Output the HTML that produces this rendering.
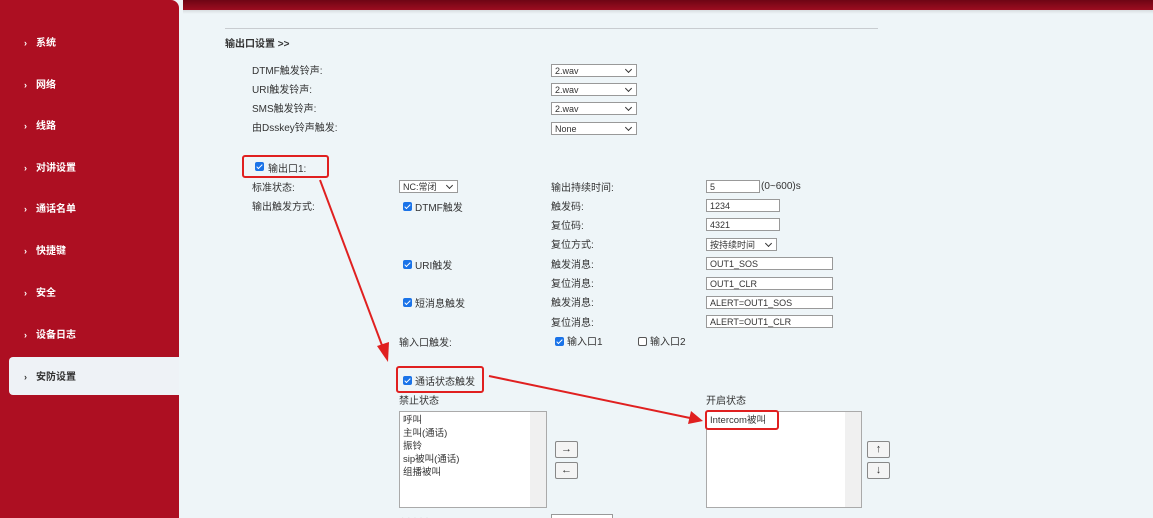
<!DOCTYPE html>
<html><head><meta charset="utf-8"><style>
*{margin:0;padding:0;box-sizing:border-box}
html,body{width:1153px;height:518px;overflow:hidden}
body{background:#eef5f8;font-family:"Liberation Sans","Noto Sans CJK SC",sans-serif;font-size:10px;line-height:14px;color:#333;position:relative}
.a{position:absolute;white-space:nowrap}
#side{position:absolute;left:0;top:0;width:179px;height:518px;background:#ad0f22;border-top-right-radius:8px}
#top{position:absolute;left:183px;top:0;width:970px;height:10px;background:linear-gradient(#6e0514,#9c0d20)}
#top2{position:absolute;left:183px;top:10px;width:970px;height:4px;background:linear-gradient(#d8dde0,#eef5f8)}
.nav{position:absolute;left:24px;color:#fff;font-weight:bold;font-size:10px}
.nav span{margin-right:9px;font-size:9px}
.act{position:absolute;left:9px;top:357px;width:170px;height:38px;background:#eef2f6;border-radius:4px 0 0 4px}
.sel,.inp{position:absolute;background:#fff;border:1px solid #999;height:13px;font-size:9px;line-height:12px;padding-left:3px;color:#333}
.sel:after{content:"";position:absolute;right:5px;top:2px;width:4px;height:4px;border-right:1.5px solid #333;border-bottom:1.5px solid #333;transform:rotate(45deg)}
.cb{position:absolute;width:9px;height:9px;background:#1a73e8;border-radius:2px}
.cb:after{content:"";position:absolute;left:3px;top:1px;width:2px;height:5px;border:solid #fff;border-width:0 1.5px 1.5px 0;transform:rotate(45deg)}
.cbo{position:absolute;width:9px;height:9px;border:1px solid #555;border-radius:2px;background:#fff}
.rb{position:absolute;border:2px solid #e02020;border-radius:3px}
.lb{position:absolute;background:#fff;border:1px solid #aaa;font-size:9.5px;line-height:13px;padding:2px 3px}
.sb{position:absolute;right:0;top:0;width:16px;height:100%;background:#f0f0f0}
.btn{position:absolute;width:23px;height:17px;border:1px solid #888;border-radius:2px;background:#f4f4f4;text-align:center;font-size:11px;line-height:15px}
</style></head><body>
<div id="side"></div>
<div id="top"></div><div id="top2"></div>
<div class="nav" style="top:36px"><span>›</span>系统</div>
<div class="nav" style="top:78px"><span>›</span>网络</div>
<div class="nav" style="top:119px"><span>›</span>线路</div>
<div class="nav" style="top:161px"><span>›</span>对讲设置</div>
<div class="nav" style="top:202px"><span>›</span>通话名单</div>
<div class="nav" style="top:244px"><span>›</span>快捷键</div>
<div class="nav" style="top:286px"><span>›</span>安全</div>
<div class="nav" style="top:328px"><span>›</span>设备日志</div>
<div class="act"></div>
<div class="nav" style="top:370px;color:#333"><span>›</span>安防设置</div>

<div class="a" style="left:225px;top:28px;width:653px;height:1px;background:#c8ccd0"></div>
<div class="a" style="left:225px;top:38px;font-weight:bold;color:#333">输出口设置 &gt;&gt;</div>
<div class="a" style="left:252px;top:65px">DTMF触发铃声:</div>
<div class="a" style="left:252px;top:84px">URI触发铃声:</div>
<div class="a" style="left:252px;top:103px">SMS触发铃声:</div>
<div class="a" style="left:252px;top:122px">由Dsskey铃声触发:</div>
<div class="sel" style="left:551px;top:64px;width:86px">2.wav</div>
<div class="sel" style="left:551px;top:83px;width:86px">2.wav</div>
<div class="sel" style="left:551px;top:102px;width:86px">2.wav</div>
<div class="sel" style="left:551px;top:122px;width:86px">None</div>

<div class="rb" style="left:242px;top:155px;width:87px;height:23px"></div>
<div class="cb" style="left:255px;top:162px"></div>
<div class="a" style="left:268px;top:163px">输出口1:</div>
<div class="a" style="left:252px;top:182px">标准状态:</div>
<div class="a" style="left:252px;top:201px">输出触发方式:</div>
<div class="sel" style="left:399px;top:180px;width:59px">NC:常闭</div>
<div class="cb" style="left:403px;top:202px"></div><div class="a" style="left:415px;top:202px">DTMF触发</div>
<div class="cb" style="left:403px;top:260px"></div><div class="a" style="left:415px;top:260px">URI触发</div>
<div class="cb" style="left:403px;top:298px"></div><div class="a" style="left:415px;top:298px">短消息触发</div>

<div class="a" style="left:551px;top:182px">输出持续时间:</div>
<div class="a" style="left:551px;top:201px">触发码:</div>
<div class="a" style="left:551px;top:220px">复位码:</div>
<div class="a" style="left:551px;top:239px">复位方式:</div>
<div class="a" style="left:551px;top:259px">触发消息:</div>
<div class="a" style="left:551px;top:278px">复位消息:</div>
<div class="a" style="left:551px;top:297px">触发消息:</div>
<div class="a" style="left:551px;top:317px">复位消息:</div>
<div class="inp" style="left:706px;top:180px;width:54px">5</div><div class="a" style="left:761px;top:180px">(0~600)s</div>
<div class="inp" style="left:706px;top:199px;width:74px">1234</div>
<div class="inp" style="left:706px;top:218px;width:74px">4321</div>
<div class="sel" style="left:706px;top:238px;width:71px">按持续时间</div>
<div class="inp" style="left:706px;top:257px;width:127px">OUT1_SOS</div>
<div class="inp" style="left:706px;top:277px;width:127px">OUT1_CLR</div>
<div class="inp" style="left:706px;top:296px;width:127px">ALERT=OUT1_SOS</div>
<div class="inp" style="left:706px;top:315px;width:127px">ALERT=OUT1_CLR</div>

<div class="a" style="left:399px;top:337px">输入口触发:</div>
<div class="cb" style="left:555px;top:337px"></div><div class="a" style="left:567px;top:336px">输入口1</div>
<div class="cbo" style="left:638px;top:337px"></div><div class="a" style="left:650px;top:336px">输入口2</div>

<div class="rb" style="left:396px;top:366px;width:88px;height:27px"></div>
<div class="cb" style="left:403px;top:376px"></div><div class="a" style="left:415px;top:376px">通话状态触发</div>
<div class="a" style="left:399px;top:395px">禁止状态</div>
<div class="lb" style="left:399px;top:411px;width:148px;height:97px">呼叫<br>主叫(通话)<br>振铃<br>sip被叫(通话)<br>组播被叫<div class="sb"></div></div>
<div class="btn" style="left:555px;top:441px">→</div>
<div class="btn" style="left:555px;top:462px">←</div>
<div class="a" style="left:706px;top:395px">开启状态</div>
<div class="lb" style="left:706px;top:411px;width:156px;height:97px">Intercom被叫<div class="sb"></div></div>
<div class="rb" style="left:705px;top:410px;width:74px;height:20px"></div>
<div class="btn" style="left:867px;top:441px">↑</div>
<div class="btn" style="left:867px;top:462px">↓</div>
<div class="inp" style="left:551px;top:514px;width:62px"></div>
<div class="a" style="left:401px;top:512px;color:#666">· · · · ·</div>

<svg class="a" style="left:0;top:0" width="1153" height="518">
<g stroke="#e02020" stroke-width="2" fill="#e02020">
<line x1="320" y1="180" x2="383" y2="348"/>
<polygon points="388,362 377,346 389,342" stroke="none"/>
<line x1="489" y1="376" x2="690" y2="418"/>
<polygon points="703,421 688,424 691,411" stroke="none"/>
</g></svg>
</body></html>
